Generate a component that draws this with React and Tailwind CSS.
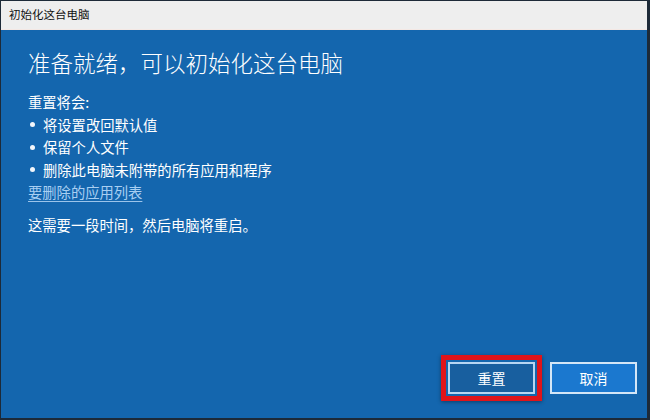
export default function App() {
  const items = ['将设置改回默认值', '保留个人文件', '删除此电脑未附带的所有应用和程序'];
  return (
    <div
      className="w-[650px] h-[420px] bg-[#1d2a38] pt-px pl-px pr-[3px] pb-[2px] flex flex-col"
      style={{ fontFamily: '"Microsoft YaHei", "Noto Sans CJK SC", sans-serif' }}
    >
      <div className="h-[29px] shrink-0 bg-[#eeeeee] border-b border-[#f4e8e4] flex items-center pl-[8px] text-[11.5px] text-[#111]">
        初始化这台电脑
      </div>
      <div className="flex-1 bg-[#1466ae] flex flex-col text-white px-[27px]">
        <h1 className="mt-[16px] text-[22.5px] leading-[32px] font-light">
          准备就绪，可以初始化这台电脑
        </h1>
        <div className="mt-[13px] text-[14.3px] leading-[22.5px]">
          <p>重置将会:</p>
          <ul>
            {items.map((t) => (
              <li key={t} className="flex items-center">
                <span className="w-[15px] flex pl-[2px]">
                  <span className="w-[5px] h-[5px] rounded-full bg-[#f2f6fb]" />
                </span>
                <span>{t}</span>
              </li>
            ))}
          </ul>
          <a className="underline decoration-[#9cc4ea] text-[#a9cff2] underline-offset-[3px]">要删除的应用列表</a>
          <p className="mt-[10px]">这需要一段时间，然后电脑将重启。</p>
        </div>
        <div className="mt-auto mb-[17px] flex justify-end gap-[13px] items-center">
          <div className="border-[5px] border-[#e0141a] p-[2px] shadow-[0_1px_4px_rgba(0,0,0,0.4)] -mr-[5px]">
            <button className="w-[87px] h-[32px] border-2 border-[#b8d6f2] bg-[#185f9f] text-[14px] text-white">
              重置
            </button>
          </div>
          <button className="w-[87px] h-[32px] border-2 border-[#d4e6f7] bg-[#1b78cf] text-[14px] text-white mr-[-17px]">
            取消
          </button>
        </div>
      </div>
    </div>
  );
}
